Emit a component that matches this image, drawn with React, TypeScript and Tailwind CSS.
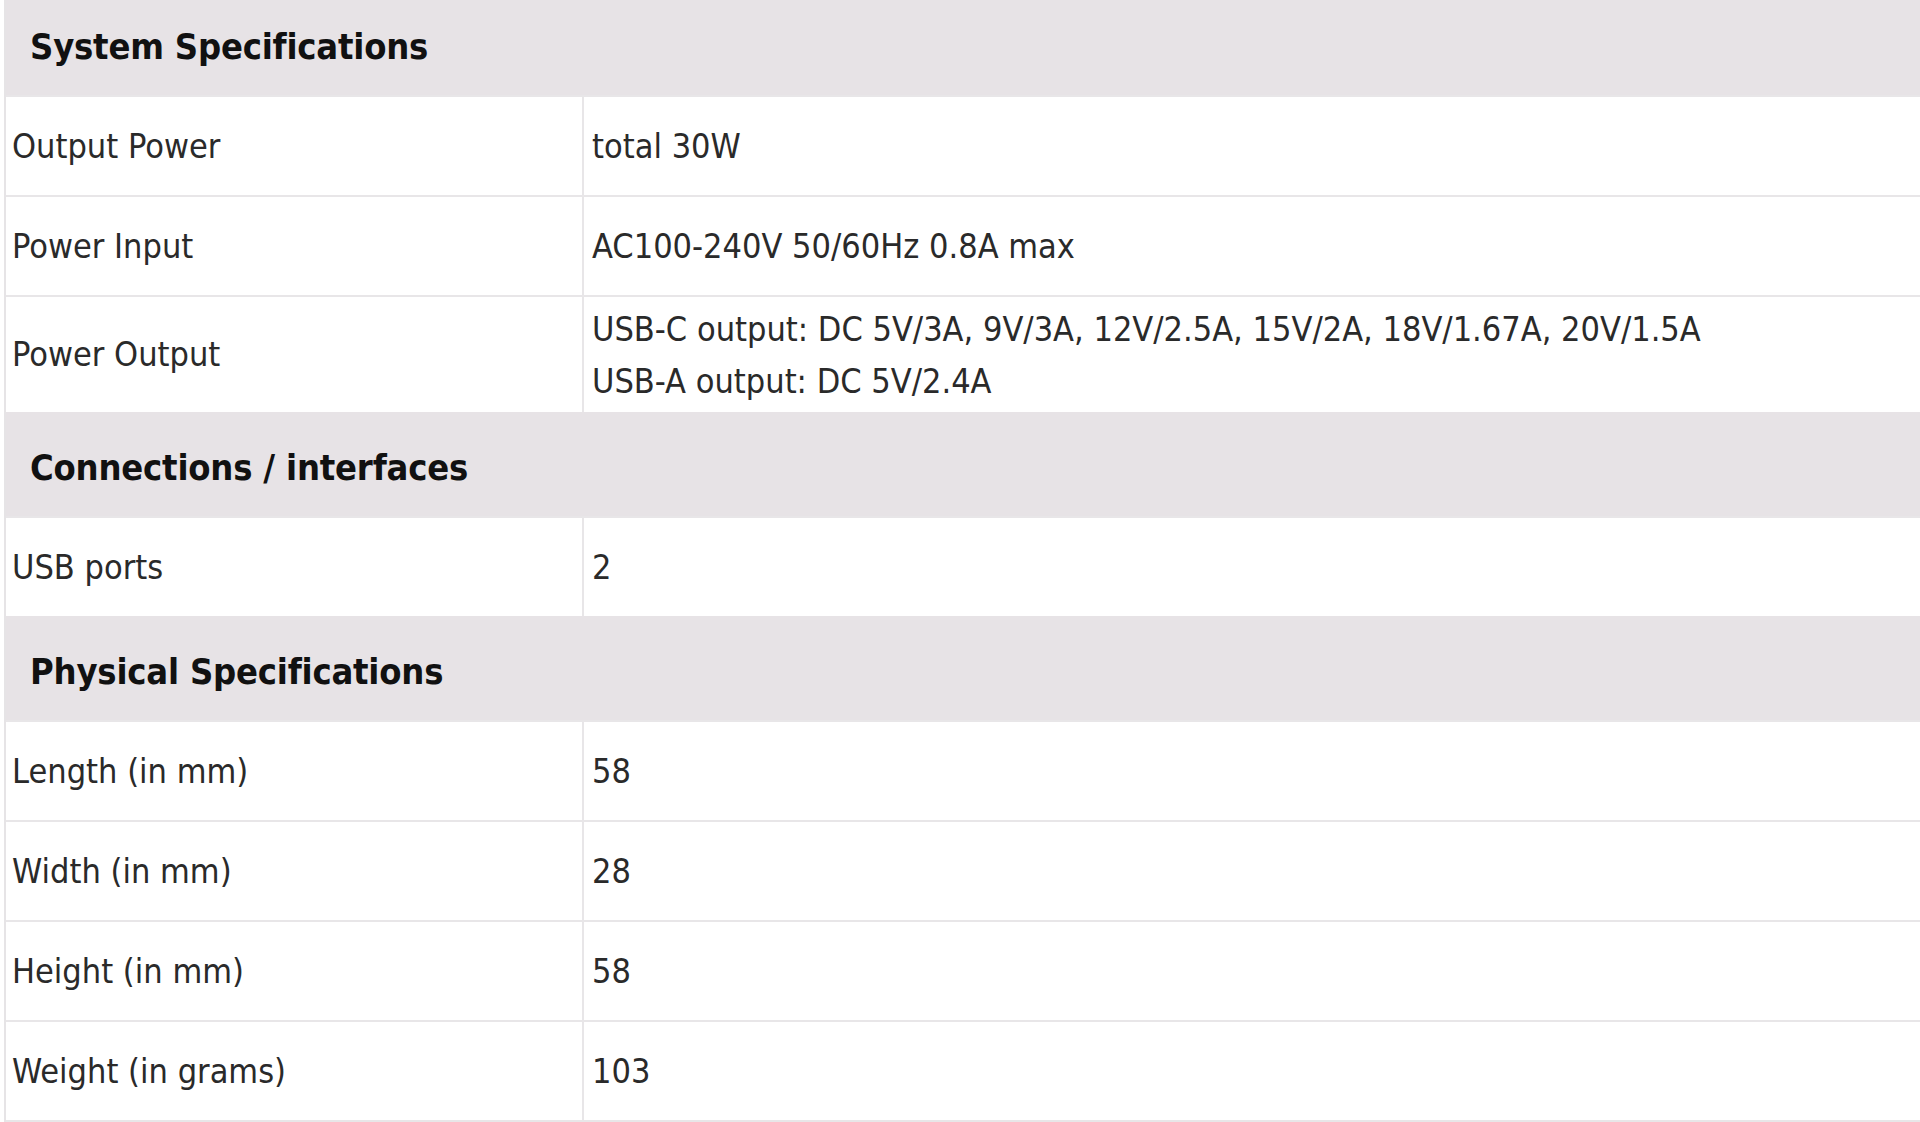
import React from 'react';

type Row = { label: string; value: string[] };
type Section = { title: string; rows: Row[] };

const sections: Section[] = [
  {
    title: 'System Specifications',
    rows: [
      { label: 'Output Power', value: ['total 30W'] },
      { label: 'Power Input', value: ['AC100-240V 50/60Hz 0.8A max'] },
      {
        label: 'Power Output',
        value: [
          'USB-C output: DC 5V/3A, 9V/3A, 12V/2.5A, 15V/2A, 18V/1.67A, 20V/1.5A',
          'USB-A output: DC 5V/2.4A',
        ],
      },
    ],
  },
  {
    title: 'Connections / interfaces',
    rows: [{ label: 'USB ports', value: ['2'] }],
  },
  {
    title: 'Physical Specifications',
    rows: [
      { label: 'Length (in mm)', value: ['58'] },
      { label: 'Width (in mm)', value: ['28'] },
      { label: 'Height (in mm)', value: ['58'] },
      { label: 'Weight (in grams)', value: ['103'] },
    ],
  },
];

export default function App() {
  return (
    <div
      className="w-[1920px] h-[1122px] overflow-hidden bg-white pl-[4px]"
      style={{ fontFamily: '"DejaVu Sans Condensed", "DejaVu Sans", sans-serif' }}
    >
      <div className="w-[1940px] border-l-2 border-[#e6e4e6] -mt-[9px]">
        {sections.map((s) => (
          <div key={s.title}>
            <div className="h-[104px] bg-[#e7e3e6] flex items-center pt-[8px] pl-[24px] text-[36px] font-bold text-[#111] tracking-[-0.2px]">
              {s.title}
            </div>
            {s.rows.map((r) => (
              <div
                key={r.label}
                className={`flex border-t-2 border-[#e8e6e8] text-[34px] text-[#2a2a2a] ${
                  r.value.length > 1 ? 'h-[117px]' : 'h-[100px]'
                }`}
              >
                <div className="w-[578px] shrink-0 flex items-center pl-[6px] border-r-2 border-[#e8e6e8]">
                  {r.label}
                </div>
                <div className="flex flex-col justify-center pl-[8px] leading-[52px]">
                  {r.value.map((v) => (
                    <div key={v}>{v}</div>
                  ))}
                </div>
              </div>
            ))}
          </div>
        ))}
        <div className="border-t-2 border-[#e8e6e8]" />
      </div>
    </div>
  );
}
